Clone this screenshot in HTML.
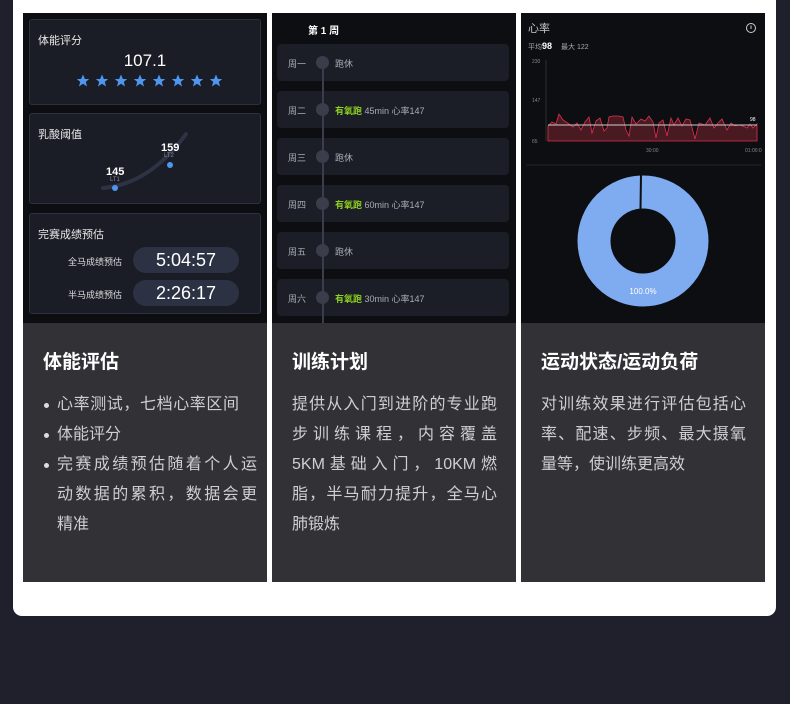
<!DOCTYPE html>
<html><head><meta charset="utf-8"><style>
*{margin:0;padding:0;box-sizing:border-box}
body{width:790px;height:704px;background:#1f202b;position:relative;overflow:hidden;font-family:"Liberation Sans","Noto Sans CJK SC",sans-serif}
.card{position:absolute;left:13px;top:0;width:763px;height:616px;background:#fff;border-radius:0 0 9px 9px}
.col{position:absolute;top:13px;width:244px;height:569px;background:#313136}
.shot{position:absolute;left:0;top:0;width:244px;height:310px;background:#0d0e11;overflow:hidden}
.txt{position:absolute;left:20px;top:337px;width:205px;color:#cfcfd2;font-size:16px;line-height:30px}
.txt h3{color:#fff;font-size:19px;font-weight:bold;margin-bottom:14px;line-height:26px}
.j{text-align:justify;text-align-last:justify;white-space:nowrap}
.box{position:absolute;left:6px;width:232px;background:#1a1d26;border:1px solid #2d3140;border-radius:3px}
.lbl{position:absolute;left:8px;top:12px;color:#e8e8e8;font-size:11px}
.pill{position:absolute;left:103px;width:106px;height:26px;border-radius:13px;background:#2c3243;color:#fff;font-size:18px;text-align:center;line-height:26px}
.pl{position:absolute;left:38px;font-size:9px;color:#ddd}
.row{position:absolute;left:5px;width:232px;height:37px;background:#1b1e27;border-radius:4px;font-size:9px;color:#a9acb5}
.row .d{position:absolute;left:11px;top:13px}
.row .t{position:absolute;left:58px;top:13px}
.row .t b{color:#8fd11e;font-weight:bold}
.dot{position:absolute;left:39px;top:12px;width:13px;height:13px;border-radius:50%;background:#3a3e4b;z-index:3}
li{position:relative;padding-left:14px;list-style:none}
li:before{content:"";position:absolute;left:1px;top:13px;width:5px;height:5px;border-radius:50%;background:#ddd}
</style></head><body>
<div class="card"></div>

<div class="col" style="left:23px">
 <div class="shot">
  <div class="box" style="top:6px;height:86px"><div class="lbl">体能评分</div>
   <div style="position:absolute;left:0;right:0;top:31px;text-align:center;color:#fff;font-size:17px">107.1</div>
   <svg style="position:absolute;left:0;top:0" width="232" height="86"><defs><path id="s" d="M0 -6.5 L1.9 -2 L6.2 -2 L2.8 0.9 L4 5.5 L0 2.8 L-4 5.5 L-2.8 0.9 L-6.2 -2 L-1.9 -2 Z" fill="#4f96f0"/></defs>
   <use href="#s" x="53" y="61"/><use href="#s" x="72" y="61"/><use href="#s" x="91" y="61"/><use href="#s" x="110" y="61"/><use href="#s" x="129" y="61"/><use href="#s" x="148" y="61"/><use href="#s" x="167" y="61"/><use href="#s" x="186" y="61"/></svg>
  </div>
  <div class="box" style="top:100px;height:91px"><div class="lbl">乳酸阈值</div>
   <svg style="position:absolute;left:0;top:0" width="232" height="91"><path d="M73 74 Q120 70 156 20" stroke="#2d3345" stroke-width="4" fill="none" stroke-linecap="round"/><circle cx="85" cy="74" r="3" fill="#4f96f0"/><circle cx="140" cy="51" r="3" fill="#4f96f0"/>
   <text x="76" y="61" fill="#fff" font-size="11" font-weight="bold" font-family="Liberation Sans">145</text><text x="80" y="67" fill="#889" font-size="6" font-family="Liberation Sans">LT1</text>
   <text x="131" y="37" fill="#fff" font-size="11" font-weight="bold" font-family="Liberation Sans">159</text><text x="134" y="43" fill="#889" font-size="6" font-family="Liberation Sans">LT2</text></svg>
  </div>
  <div class="box" style="top:200px;height:101px"><div class="lbl">完赛成绩预估</div>
   <div class="pl" style="top:41px">全马成绩预估</div><div class="pill" style="top:33px">5:04:57</div>
   <div class="pl" style="top:74px">半马成绩预估</div><div class="pill" style="top:66px">2:26:17</div>
  </div>
 </div>
 <div class="txt" style="width:214px"><h3>体能评估</h3>
  <li><div class="j" style="width:182px">心率测试，七档心率区间</div></li>
  <li>体能评分</li>
  <li><div class="j">完赛成绩预估随着个人运</div><div class="j">动数据的累积，数据会更</div><div>精准</div></li>
 </div>
</div>

<div class="col" style="left:272px">
 <div class="shot">
  <div style="position:absolute;left:36px;top:9px;color:#fff;font-size:10px;font-weight:bold">第 1 周</div>
  <div class="row" style="top:31px"><span class="d">周一</span><span class="dot"></span><span class="t">跑休</span></div>
  <div class="row" style="top:78px"><span class="d">周二</span><span class="dot"></span><span class="t"><b>有氧跑</b> 45min 心率147</span></div>
  <div class="row" style="top:125px"><span class="d">周三</span><span class="dot"></span><span class="t">跑休</span></div>
  <div class="row" style="top:172px"><span class="d">周四</span><span class="dot"></span><span class="t"><b>有氧跑</b> 60min 心率147</span></div>
  <div class="row" style="top:219px"><span class="d">周五</span><span class="dot"></span><span class="t">跑休</span></div>
  <div class="row" style="top:266px"><span class="d">周六</span><span class="dot"></span><span class="t"><b>有氧跑</b> 30min 心率147</span></div>
  <div style="position:absolute;left:50px;top:50px;width:2px;height:260px;background:#3a3e4b;z-index:2"></div>
 </div>
 <div class="txt"><h3>训练计划</h3>
  <div class="j">提供从入门到进阶的专业跑</div>
  <div class="j">步训练课程，内容覆盖</div>
  <div class="j">5KM基础入门，10KM燃</div>
  <div class="j">脂，半马耐力提升，全马心</div>
  <div>肺锻炼</div>
 </div>
</div>

<div class="col" style="left:521px">
 <div class="shot">
  <svg width="244" height="310" style="position:absolute;left:0;top:0" font-family="Liberation Sans,Noto Sans CJK SC,sans-serif">
   <text x="7" y="19" fill="#c8c8cc" font-size="11">心率</text>
   <circle cx="230" cy="15" r="4.5" stroke="#ccc" fill="none" stroke-width="1"/><line x1="230" y1="12.5" x2="230" y2="16" stroke="#ccc"/>
   <text x="7" y="36" fill="#aaa" font-size="7">平均</text><text x="21" y="36" fill="#fff" font-size="9" font-weight="bold">98</text><text x="40" y="36" fill="#aaa" font-size="7">最大 122</text>
   <text x="11" y="50" fill="#888" font-size="5">230</text><text x="11" y="89" fill="#888" font-size="5">147</text><text x="11" y="130" fill="#888" font-size="5">65</text>
   <line x1="25" y1="47" x2="25" y2="128" stroke="#444" stroke-width="0.6"/>
   <path d="M27 128 L27 113 L31 109 L35 111 L38 101 L42 107 L48 111 L52 114 L56 110 L60 117 L64 109 L68 104 L71 120 L75 108 L79 105 L83 118 L86 115 L88 104 L92 103 L97 103 L102 104 L105 117 L108 123 L111 104 L115 111 L120 106 L124 108 L128 103 L132 109 L135 125 L138 110 L142 107 L146 123 L150 105 L153 112 L157 105 L161 113 L165 106 L169 107 L174 126 L178 110 L184 112 L189 105 L193 115 L197 110 L201 106 L206 117 L210 110 L214 113 L218 112 L222 113 L226 115 L229 111 L232 115 L236 111 L236 128 Z" fill="#4a1a22" stroke="#e0304e" stroke-width="0.8"/>
   <line x1="27" y1="112" x2="236" y2="112" stroke="#ccc" stroke-width="1"/>
   <text x="229" y="108" fill="#fff" font-size="5">98</text>
   <text x="125" y="139" fill="#888" font-size="5">30:00</text><text x="224" y="139" fill="#888" font-size="5">01:00:0</text>
   <line x1="5" y1="152" x2="240" y2="152" stroke="#25262c"/>
   <circle cx="122" cy="228" r="49" fill="none" stroke="#7fabf0" stroke-width="33"/>
   <line x1="120" y1="161" x2="119.5" y2="196" stroke="#0d0e11" stroke-width="2"/>
   <text x="122" y="281" fill="#fff" font-size="8" text-anchor="middle">100.0%</text>
  </svg>
 </div>
 <div class="txt"><h3>运动状态/运动负荷</h3>
  <div class="j">对训练效果进行评估包括心</div>
  <div class="j">率、配速、步频、最大摄氧</div>
  <div>量等，使训练更高效</div>
 </div>
</div>
</body></html>
